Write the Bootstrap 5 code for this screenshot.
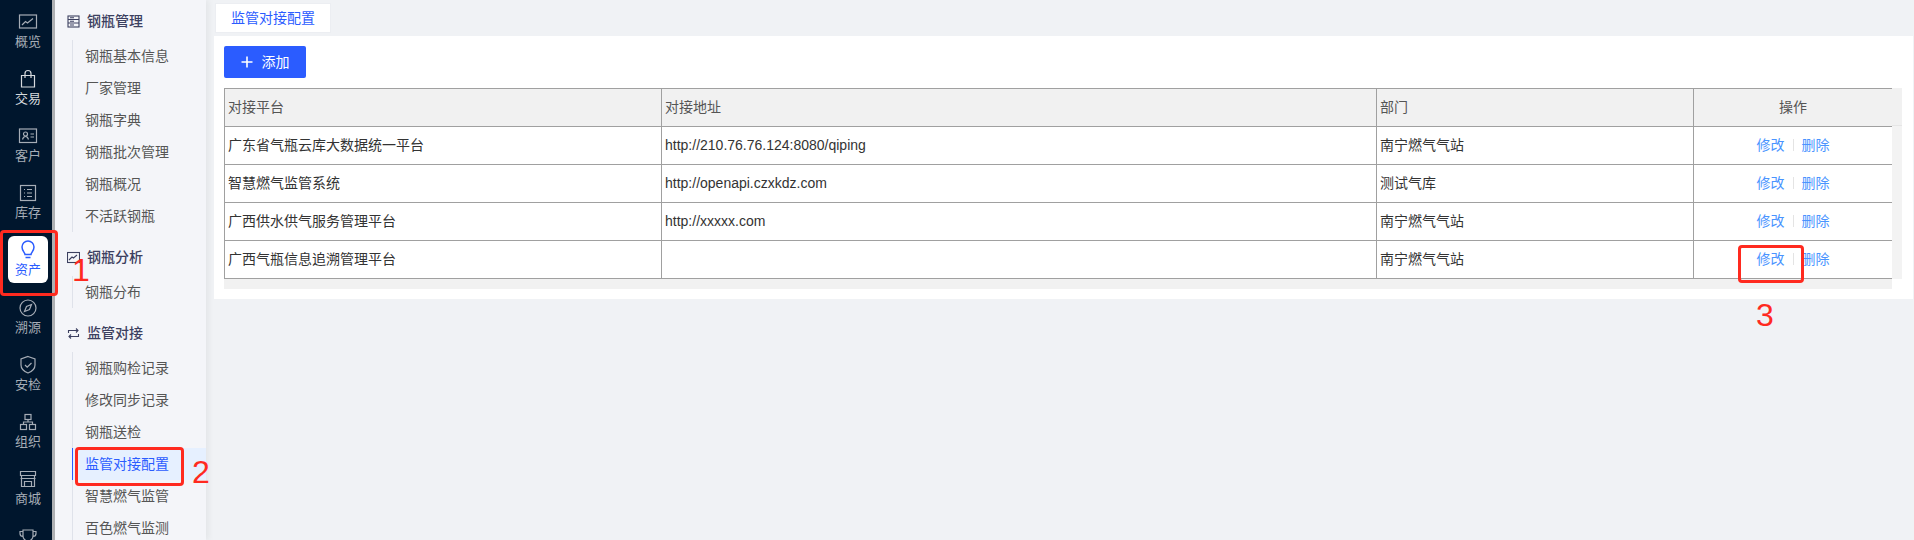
<!DOCTYPE html>
<html lang="zh-CN">
<head>
<meta charset="utf-8">
<title>监管对接配置</title>
<link href="https://cdn.jsdelivr.net/npm/bootstrap@5.3.0/dist/css/bootstrap.min.css" rel="stylesheet">
<style>
html,body{height:540px;overflow:hidden}
body{font-family:"Liberation Sans","Noto Sans CJK SC",sans-serif;font-size:14px;background:#f0f2f5;color:#333;position:relative}
.rail{width:55px;flex:none;background:#00162d;border-right:3px solid #aeb0b3;padding:2px 0 0 4px;height:540px;overflow:hidden}
.rail-item{height:57.2px;color:#a6adb6;font-size:13px;line-height:16px}
.rail-item svg{width:20px;height:20px;fill:none;stroke:currentColor;stroke-width:1.2;display:block;margin-bottom:2px}
.rail-pill{width:40px;height:47px;border-radius:6px}
.rail-item.is-lit{color:#d6dade}
.rail-item.is-on .rail-pill{background:#fff;color:#2b5cff}
.rail-item.is-on svg{stroke-width:1.5}
.rail-item.is-cut .rail-pill{padding-top:5px}
.subnav{width:151px;flex:none;background:#f4f5f9;height:540px;overflow:hidden;padding-top:4px;box-shadow:3px 0 6px rgba(0,0,0,.05)}
.sub-head{height:36px;padding:0 0 2px 12px;gap:7px;font-weight:500;color:#3c4060;font-size:14px}
.sub-head svg{width:13px;height:13px;fill:none;stroke:#3c4060;stroke-width:1.1;flex:none}
.sub-group{margin:0 0 8px 17px;border-left:1px solid #dfe2ea;list-style:none;padding:0}
.sub-link{height:32px;line-height:32px;padding-left:12px;color:#555;display:block;text-decoration:none}
.sub-link.is-on{background:#e6f0ff;color:#2b5cff;box-shadow:-1px 0 0 #2b5cff}
.workspace{flex:1;min-width:0;padding:3px 1px 0 8px}
.tab-chip{width:116px;height:30px;margin-left:1px;background:#fff;border:1px solid #eceef2;color:#2b5cff;line-height:28px;text-align:center;font-size:14px}
.panel{margin-top:3px;background:#fff;height:263px;padding:10px}
.btn-add{width:82px;height:32px;background:#2b5cff;border-radius:2px;color:#fff;font-size:14px;padding:0;gap:9px;border:0}
.btn-add svg{width:12px;height:12px;stroke:#fff;stroke-width:1.6}
.grid-wrap{margin-top:10px;width:1678px}
.grid-main{width:1668px}
.grid-side{width:10px;height:191px;background:#f3f3f3}
.grid-side::before{content:"";display:block;height:38px;background:#f1f1f1;border-bottom:1px solid #e6e6e6}
.grid-bar{height:10px;background:#f1f1f1}
.conf-table{table-layout:fixed;width:1668px;border-collapse:collapse;margin:0}
.conf-table th,.conf-table td{border:1px solid #a0a0a0;height:38px;padding:0 3px;font-weight:400;font-size:14px;color:#333;vertical-align:middle;white-space:nowrap}
.conf-table th{background:#f1f1f1;color:#555}
.conf-table .ops{text-align:center;padding:0}
.conf-table th.ops{color:#555}
.op-link{color:#4a94ff;text-decoration:none}
.op-sep{display:inline-block;width:1px;height:12px;background:#e4e4e4;margin:0 8px;vertical-align:-1px}
.mark-box{position:absolute;border:3px solid #ff2a1f;border-radius:4px;pointer-events:none}
.mark-num{position:absolute;color:#ff2a1f;font-family:"Liberation Sans",sans-serif;font-size:32px;line-height:32px;pointer-events:none}
</style>
</head>
<body>
<div class="d-flex">
  <nav class="rail">
    <div class="rail-item d-flex justify-content-center align-items-center"><div class="rail-pill d-flex flex-column align-items-center justify-content-center"><svg viewBox="0 0 20 20"><rect x="1.5" y="3" width="17" height="13"/><path d="M4 13l3.500-3.500 2 1.500L15 6.500"/></svg>概览</div></div>
    <div class="rail-item is-lit d-flex justify-content-center align-items-center"><div class="rail-pill d-flex flex-column align-items-center justify-content-center"><svg viewBox="0 0 20 20"><path d="M3.500 6.500h13V18h-13zM7 9V4.500a3 3 0 0 1 6 0V9"/></svg>交易</div></div>
    <div class="rail-item d-flex justify-content-center align-items-center"><div class="rail-pill d-flex flex-column align-items-center justify-content-center"><svg viewBox="0 0 20 20"><rect x="1.500" y="3" width="17" height="13.500"/><circle cx="7.500" cy="8" r="2"/><path d="M4.500 13.500c.5-2 1.500-3 3-3s2.500 1 3 3M12.500 8h3.500M12.500 11h3.500"/></svg>客户</div></div>
    <div class="rail-item d-flex justify-content-center align-items-center"><div class="rail-pill d-flex flex-column align-items-center justify-content-center"><svg viewBox="0 0 20 20"><rect x="2.500" y="2.500" width="15" height="15"/><path d="M6 6.500h1M9 6.500h5M6 10h1M9 10h5M6 13.500h1M9 13.500h5"/></svg>库存</div></div>
    <div class="rail-item is-on d-flex justify-content-center align-items-center"><div class="rail-pill d-flex flex-column align-items-center justify-content-center"><svg viewBox="0 0 20 20"><path d="M7 14.500c0-2-3-3.500-3-7.500a6 6 0 0 1 12 0c0 4-3 5.500-3 7.500zM7.500 17.500h5"/></svg>资产</div></div>
    <div class="rail-item d-flex justify-content-center align-items-center"><div class="rail-pill d-flex flex-column align-items-center justify-content-center"><svg viewBox="0 0 20 20"><circle cx="10" cy="10" r="8"/><path d="M13.500 6.500l-2 5-5 2 2-5z"/></svg>溯源</div></div>
    <div class="rail-item d-flex justify-content-center align-items-center"><div class="rail-pill d-flex flex-column align-items-center justify-content-center"><svg viewBox="0 0 20 20"><path d="M10 1.500l7 2.500v6c0 4-3 6.500-7 8-4-1.500-7-4-7-8V4zM7 10l2.200 2.200L13.500 8"/></svg>安检</div></div>
    <div class="rail-item d-flex justify-content-center align-items-center"><div class="rail-pill d-flex flex-column align-items-center justify-content-center"><svg viewBox="0 0 20 20"><rect x="7" y="2.500" width="6" height="5"/><rect x="2.500" y="12.500" width="6" height="5"/><rect x="11.500" y="12.500" width="6" height="5"/><path d="M10 7.500v2.500M5.500 12.500V10h9v2.500"/></svg>组织</div></div>
    <div class="rail-item d-flex justify-content-center align-items-center"><div class="rail-pill d-flex flex-column align-items-center justify-content-center"><svg viewBox="0 0 20 20"><path d="M2.500 2.500h15v4h-15zM3.500 6.500v11h13v-11M2.500 9.500h15M6.500 17.500v-5h7v5"/></svg>商城</div></div>
    <div class="rail-item is-cut d-flex justify-content-center align-items-center"><div class="rail-pill d-flex flex-column align-items-center justify-content-start"><svg viewBox="0 0 20 20"><path d="M5 3h10v6a5 5 0 0 1-10 0zM5 4.500H2v2a3 3 0 0 0 3 3M15 4.500h3v2a3 3 0 0 1-3 3M10 14v3M6.500 18h7"/></svg></div></div>
  </nav>

  <aside class="subnav">
    <div class="sub-head d-flex align-items-center"><svg viewBox="0 0 13 13"><rect x="1" y="1" width="11" height="11"/><path d="M1 4.500h11M1 8h11M3 2.800h4M3 6.300h4M3 10h4"/></svg>钢瓶管理</div>
    <ul class="sub-group">
      <li><a class="sub-link" href="#">钢瓶基本信息</a></li>
      <li><a class="sub-link" href="#">厂家管理</a></li>
      <li><a class="sub-link" href="#">钢瓶字典</a></li>
      <li><a class="sub-link" href="#">钢瓶批次管理</a></li>
      <li><a class="sub-link" href="#">钢瓶概况</a></li>
      <li><a class="sub-link" href="#">不活跃钢瓶</a></li>
    </ul>
    <div class="sub-head d-flex align-items-center"><svg viewBox="0 0 13 13"><rect x=".5" y="1.500" width="12" height="10"/><path d="M2 9l3-3 1.500 1L10 4"/></svg>钢瓶分析</div>
    <ul class="sub-group">
      <li><a class="sub-link" href="#">钢瓶分布</a></li>
    </ul>
    <div class="sub-head d-flex align-items-center"><svg viewBox="0 0 13 13"><path d="M1.500 6V3.500h9.500M9 1.500l2 2-2 2M11.500 7v2.500H2M4 7.500l-2 2 2 2"/></svg>监管对接</div>
    <ul class="sub-group">
      <li><a class="sub-link" href="#">钢瓶购检记录</a></li>
      <li><a class="sub-link" href="#">修改同步记录</a></li>
      <li><a class="sub-link" href="#">钢瓶送检</a></li>
      <li><a class="sub-link is-on" href="#">监管对接配置</a></li>
      <li><a class="sub-link" href="#">智慧燃气监管</a></li>
      <li><a class="sub-link" href="#">百色燃气监测</a></li>
    </ul>
  </aside>

  <main class="workspace">
    <div class="tab-chip">监管对接配置</div>
    <section class="panel">
      <button type="button" class="btn btn-add d-flex align-items-center justify-content-center"><svg viewBox="0 0 12 12"><path d="M6 .5v11M.5 6h11"/></svg>添加</button>
      <div class="grid-wrap d-flex">
        <div class="grid-main">
          <table class="conf-table">
            <colgroup><col style="width:437px"><col style="width:715px"><col style="width:317px"><col style="width:199px"></colgroup>
            <thead><tr><th>对接平台</th><th>对接地址</th><th>部门</th><th class="ops">操作</th></tr></thead>
            <tbody>
              <tr><td>广东省气瓶云库大数据统一平台</td><td>http://210.76.76.124:8080/qiping</td><td>南宁燃气气站</td><td class="ops"><a class="op-link" href="#">修改</a><span class="op-sep"></span><a class="op-link" href="#">删除</a></td></tr>
              <tr><td>智慧燃气监管系统</td><td>http://openapi.czxkdz.com</td><td>测试气库</td><td class="ops"><a class="op-link" href="#">修改</a><span class="op-sep"></span><a class="op-link" href="#">删除</a></td></tr>
              <tr><td>广西供水供气服务管理平台</td><td>http://xxxxx.com</td><td>南宁燃气气站</td><td class="ops"><a class="op-link" href="#">修改</a><span class="op-sep"></span><a class="op-link" href="#">删除</a></td></tr>
              <tr><td>广西气瓶信息追溯管理平台</td><td></td><td>南宁燃气气站</td><td class="ops"><a class="op-link" href="#">修改</a><span class="op-sep"></span><a class="op-link" href="#">删除</a></td></tr>
            </tbody>
          </table>
          <div class="grid-bar"></div>
        </div>
        <div class="grid-side"></div>
      </div>
    </section>
  </main>
</div>

<div class="mark-box" style="left:0;top:230px;width:58px;height:66px"></div>
<div class="mark-box" style="left:75px;top:447px;width:109px;height:39px"></div>
<div class="mark-box" style="left:1738px;top:245px;width:66px;height:38px"></div>
<span class="mark-num" style="left:72px;top:254px">1</span>
<span class="mark-num" style="left:192px;top:456px">2</span>
<span class="mark-num" style="left:1756px;top:299px">3</span>
</body>
</html>
